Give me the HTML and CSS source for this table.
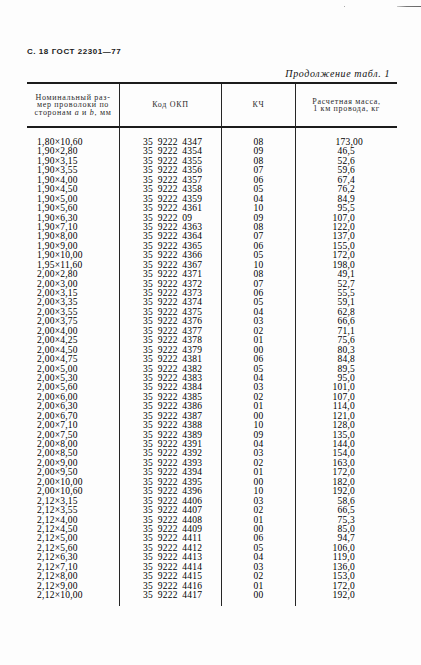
FILE: index.html
```html
<!DOCTYPE html>
<html lang="ru">
<head>
<meta charset="utf-8">
<title>ГОСТ 22301—77, с. 18</title>
<link rel="stylesheet" href="styles.css">
</head>
<body>
<div class="page">
  <div class="scan-top"><span class="speck"></span><span class="smudge"></span></div>
  <div class="title">С. 18 ГОСТ 22301—77</div>
  <div class="cont">Продолжение табл. 1</div>
  <table class="spec">
    <colgroup>
      <col class="c1"><col class="c2"><col class="c3"><col class="c4">
    </colgroup>
    <thead>
      <tr>
        <th>Номинальный раз-<br>мер проволоки по<br>сторонам <i>a</i> и <i>b</i>, мм</th>
        <th>Код ОКП</th>
        <th>КЧ</th>
        <th>Расчетная масса,<br>1 км провода, кг</th>
      </tr>
    </thead>
    <tbody>
      <tr><td>1,80×10,60</td><td>35 9222 4347</td><td>08</td><td><span class="hang">173,00</span></td></tr>
      <tr><td>1,90×2,80</td><td>35 9222 4354</td><td>09</td><td>46,5</td></tr>
      <tr><td>1,90×3,15</td><td>35 9222 4355</td><td>08</td><td>52,6</td></tr>
      <tr><td>1,90×3,55</td><td>35 9222 4356</td><td>07</td><td>59,6</td></tr>
      <tr><td>1,90×4,00</td><td>35 9222 4357</td><td>06</td><td>67,4</td></tr>
      <tr><td>1,90×4,50</td><td>35 9222 4358</td><td>05</td><td>76,2</td></tr>
      <tr><td>1,90×5,00</td><td>35 9222 4359</td><td>04</td><td>84,9</td></tr>
      <tr><td>1,90×5,60</td><td>35 9222 4361</td><td>10</td><td>95,5</td></tr>
      <tr><td>1,90×6,30</td><td>35 9222 09</td><td>09</td><td>107,0</td></tr>
      <tr><td>1,90×7,10</td><td>35 9222 4363</td><td>08</td><td>122,0</td></tr>
      <tr><td>1,90×8,00</td><td>35 9222 4364</td><td>07</td><td>137,0</td></tr>
      <tr><td>1,90×9,00</td><td>35 9222 4365</td><td>06</td><td>155,0</td></tr>
      <tr><td>1,90×10,00</td><td>35 9222 4366</td><td>05</td><td>172,0</td></tr>
      <tr><td>1,95×11,60</td><td>35 9222 4367</td><td>10</td><td>198,0</td></tr>
      <tr><td>2,00×2,80</td><td>35 9222 4371</td><td>08</td><td>49,1</td></tr>
      <tr><td>2,00×3,00</td><td>35 9222 4372</td><td>07</td><td>52,7</td></tr>
      <tr><td>2,00×3,15</td><td>35 9222 4373</td><td>06</td><td>55,5</td></tr>
      <tr><td>2,00×3,35</td><td>35 9222 4374</td><td>05</td><td>59,1</td></tr>
      <tr><td>2,00×3,55</td><td>35 9222 4375</td><td>04</td><td>62,8</td></tr>
      <tr><td>2,00×3,75</td><td>35 9222 4376</td><td>03</td><td>66,6</td></tr>
      <tr><td>2,00×4,00</td><td>35 9222 4377</td><td>02</td><td>71,1</td></tr>
      <tr><td>2,00×4,25</td><td>35 9222 4378</td><td>01</td><td>75,6</td></tr>
      <tr><td>2,00×4,50</td><td>35 9222 4379</td><td>00</td><td>80,3</td></tr>
      <tr><td>2,00×4,75</td><td>35 9222 4381</td><td>06</td><td>84,8</td></tr>
      <tr><td>2,00×5,00</td><td>35 9222 4382</td><td>05</td><td>89,5</td></tr>
      <tr><td>2,00×5,30</td><td>35 9222 4383</td><td>04</td><td>95,0</td></tr>
      <tr><td>2,00×5,60</td><td>35 9222 4384</td><td>03</td><td>101,0</td></tr>
      <tr><td>2,00×6,00</td><td>35 9222 4385</td><td>02</td><td>107,0</td></tr>
      <tr><td>2,00×6,30</td><td>35 9222 4386</td><td>01</td><td>114,0</td></tr>
      <tr><td>2,00×6,70</td><td>35 9222 4387</td><td>00</td><td>121,0</td></tr>
      <tr><td>2,00×7,10</td><td>35 9222 4388</td><td>10</td><td>128,0</td></tr>
      <tr><td>2,00×7,50</td><td>35 9222 4389</td><td>09</td><td>135,0</td></tr>
      <tr><td>2,00×8,00</td><td>35 9222 4391</td><td>04</td><td>144,0</td></tr>
      <tr><td>2,00×8,50</td><td>35 9222 4392</td><td>03</td><td>154,0</td></tr>
      <tr><td>2,00×9,00</td><td>35 9222 4393</td><td>02</td><td>163,0</td></tr>
      <tr><td>2,00×9,50</td><td>35 9222 4394</td><td>01</td><td>172,0</td></tr>
      <tr><td>2,00×10,00</td><td>35 9222 4395</td><td>00</td><td>182,0</td></tr>
      <tr><td>2,00×10,60</td><td>35 9222 4396</td><td>10</td><td>192,0</td></tr>
      <tr><td>2,12×3,15</td><td>35 9222 4406</td><td>03</td><td>58,6</td></tr>
      <tr><td>2,12×3,55</td><td>35 9222 4407</td><td>02</td><td>66,5</td></tr>
      <tr><td>2,12×4,00</td><td>35 9222 4408</td><td>01</td><td>75,3</td></tr>
      <tr><td>2,12×4,50</td><td>35 9222 4409</td><td>00</td><td>85,0</td></tr>
      <tr><td>2,12×5,00</td><td>35 9222 4411</td><td>06</td><td>94,7</td></tr>
      <tr><td>2,12×5,60</td><td>35 9222 4412</td><td>05</td><td>106,0</td></tr>
      <tr><td>2,12×6,30</td><td>35 9222 4413</td><td>04</td><td>119,0</td></tr>
      <tr><td>2,12×7,10</td><td>35 9222 4414</td><td>03</td><td>136,0</td></tr>
      <tr><td>2,12×8,00</td><td>35 9222 4415</td><td>02</td><td>153,0</td></tr>
      <tr><td>2,12×9,00</td><td>35 9222 4416</td><td>01</td><td>172,0</td></tr>
      <tr><td>2,12×10,00</td><td>35 9222 4417</td><td>00</td><td>192,0</td></tr>
    </tbody>
  </table>
</div>
</body>
</html>
```
FILE: styles.css
```css
html, body {
  margin: 0;
  padding: 0;
  background: #fdfdfd;
}
body {
  color: #111;
  font-family: "Liberation Serif", "Times New Roman", serif;
}
.page {
  width: 421px;
  height: 665px;
  overflow: hidden;
}
.scan-top {
  height: 12px;
  display: flex;
  align-items: center;
  justify-content: flex-end;
  gap: 52px;
}
.speck {
  width: 1px;
  height: 1px;
  background: #aaa;
}
.smudge {
  width: 24px;
  height: 1px;
  background: linear-gradient(to right, #ccc, #777 40%, #666);
}
.title {
  margin: 35px 0 0 27px;
  font-family: "Liberation Sans", Arial, sans-serif;
  font-weight: bold;
  font-size: 8px;
  line-height: 10px;
  letter-spacing: 0.55px;
  color: #1a1a1a;
}
.cont {
  margin: 11px 0 0 0;
  width: 390px;
  text-align: right;
  font-style: italic;
  font-size: 10px;
  line-height: 12px;
  letter-spacing: 0.6px;
}
.spec {
  margin: 2px 0 0 27px;
  width: 370px;
  table-layout: fixed;
  border-collapse: separate;
  border-spacing: 0;
  border-top: 2px solid #1c1c1c;
}
.c1 { width: 92px; }
.c2 { width: 102px; }
.c3 { width: 74px; }
.c4 { width: 102px; }
.spec th {
  height: 42px;
  padding: 0;
  font-weight: normal;
  font-size: 8px;
  line-height: 7.5px;
  letter-spacing: 0.7px;
  text-align: center;
  vertical-align: middle;
  border-bottom: 2px solid #1c1c1c;
  color: #2a2a2a;
}
.spec th + th,
.spec td + td {
  border-left: 1px solid #262626;
}
.spec td {
  padding: 0;
  font-size: 9.5px;
  line-height: 9.44px;
  height: 9.44px;
  letter-spacing: 0.25px;
  white-space: nowrap;
  vertical-align: middle;
  color: #000;
}
.spec tbody tr:first-child td {
  padding-top: 10px;
}
.spec tbody tr:last-child td {
  padding-bottom: 6px;
}
.spec td:nth-child(1) {
  padding-left: 10px;
}
.spec td:nth-child(2) {
  padding-left: 23px;
  word-spacing: 2px;
}
.spec td:nth-child(3) {
  text-align: center;
}
.spec td:nth-child(4) {
  text-align: right;
  padding-right: 42px;
}
.hang {
  margin-right: -8px;
}
```
